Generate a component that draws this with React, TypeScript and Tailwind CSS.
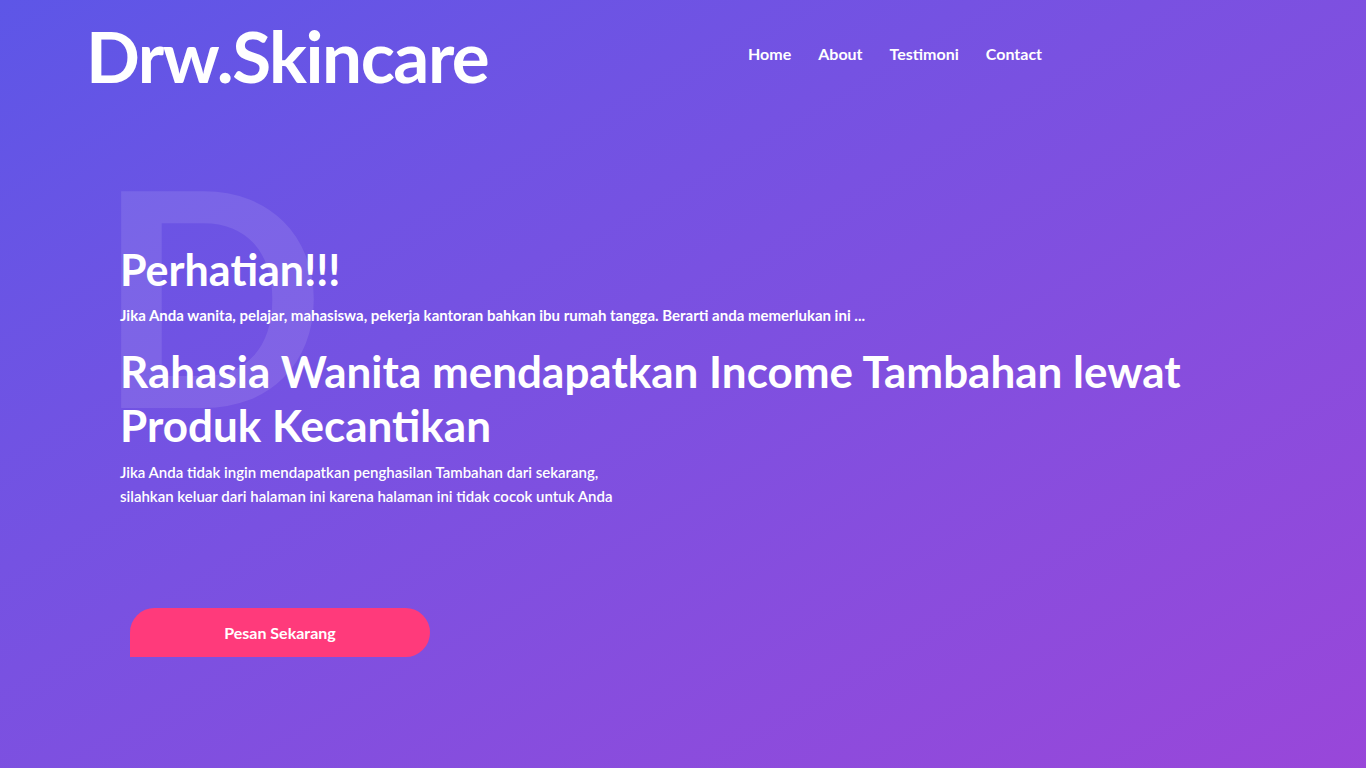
import React from 'react';

const navLinks = ['Home', 'About', 'Testimoni', 'Contact'];

const Header: React.FC = () => {
  return (
    <header className="flex items-center h-[110px] pl-[86px]">
      <div className="w-[662px]">
        <h1 className="text-[71px] leading-none font-bold tracking-[-1.5px] text-white">Drw.Skincare</h1>
      </div>
      <nav className="flex items-center gap-[27px] -mt-[2px]">
        {navLinks.map((link) => (
          <a key={link} href="#" className="text-[16px] font-bold text-white">
            {link}
          </a>
        ))}
      </nav>
    </header>
  );
};

const Hero: React.FC = () => {
  return (
    <section className="relative pl-[120px] pt-[132px]">
      <span
        aria-hidden="true"
        className="absolute left-[97px] top-[32px] text-[300px] leading-none font-bold text-white/10 select-none"
      >
        D
      </span>
      <div className="relative">
        <h2 className="text-[43px] leading-[56px] font-bold text-white">Perhatian!!!</h2>
        <p className="text-[15px] leading-[22px] font-bold text-white mt-[6px]">
          Jika Anda wanita, pelajar, mahasiswa, pekerja kantoran bahkan ibu rumah tangga. Berarti anda memerlukan ini ...
        </p>
        <h2 className="text-[44px] leading-[54px] font-bold text-white mt-[18px] max-w-[1100px]">
          Rahasia Wanita mendapatkan Income Tambahan lewat Produk Kecantikan
        </h2>
        <p className="text-[15px] leading-[24px] font-semibold text-white mt-[8px]">
          Jika Anda tidak ingin mendapatkan penghasilan Tambahan dari sekarang,
          <br />
          silahkan keluar dari halaman ini karena halaman ini tidak cocok untuk Anda
        </p>
        <button className="mt-[100px] ml-[10px] w-[300px] h-[49px] bg-[#ff3a7b] text-white text-[16px] font-bold rounded-tl-[25px] rounded-r-[25px]">
          Pesan Sekarang
        </button>
      </div>
    </section>
  );
};

export default function App() {
  return (
    <div className="font-['Lato','Liberation_Sans',sans-serif]">
      <div className="min-h-[800px] bg-gradient-to-br from-[#5d56e7] to-[#9a46d9]">
        <Header />
        <Hero />
      </div>
      <div className="h-[15200px] bg-[#9a46d9]" />
    </div>
  );
}
